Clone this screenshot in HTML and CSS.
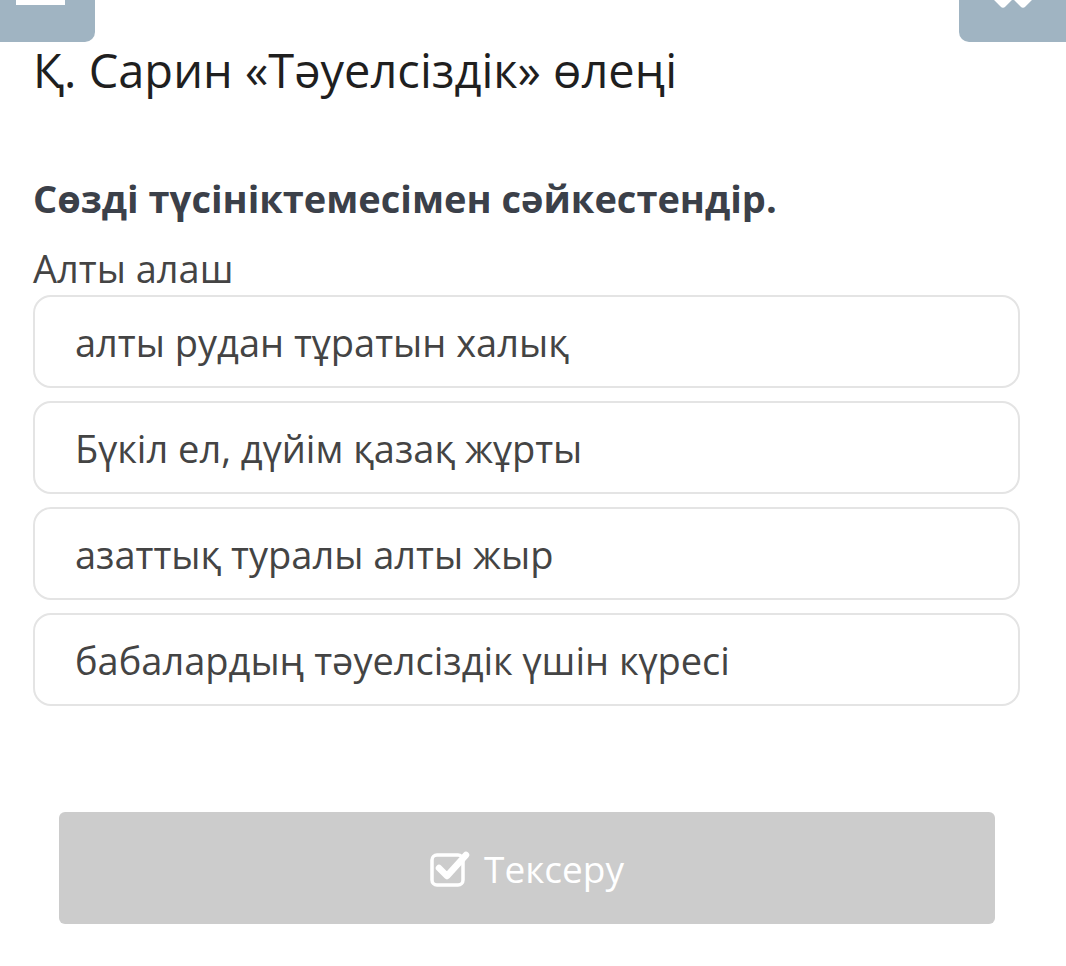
FILE: index.html
```html
<!DOCTYPE html>
<html lang="kk">
<head>
    <meta charset="UTF-8">
    <meta name="viewport" content="width=device-width, initial-scale=1.0">
    <title>Тәуелсіздік</title>
    <link rel="stylesheet" href="styles.css">
</head>
<body>
    <div class="topbar">
        <div class="tab tab-left"><span class="tab-bar"></span></div>
        <div class="tab tab-right">
            <svg class="tab-icon" width="44" height="12" viewBox="0 0 44 12">
                <path d="M2 -6 L12 4 L22 -6 M22 -6 L32 4 L42 -6" fill="none" stroke="#fff" stroke-width="7" stroke-linejoin="round" stroke-linecap="round"/>
            </svg>
        </div>
    </div>
    <div class="page">
        <h1 class="title">Қ. Сарин «Тәуелсіздік» өлеңі</h1>
        <h2 class="task">Сөзді түсініктемесімен сәйкестендір.</h2>
        <div class="word">Алты алаш</div>
        <div class="options">
            <div class="option">алты рудан тұратын халық</div>
            <div class="option">Бүкіл ел, дүйім қазақ жұрты</div>
            <div class="option">азаттық туралы алты жыр</div>
            <div class="option">бабалардың тәуелсіздік үшін күресі</div>
        </div>
        <button class="check-btn">
            <svg class="check-icon" width="40" height="38" viewBox="0 0 40 38">
                <rect x="2" y="6" width="31" height="30" rx="5" fill="none" stroke="#fff" stroke-width="3.5"/>
                <path d="M9 19 L17 27 L36 6" fill="none" stroke="#fff" stroke-width="6.5" stroke-linecap="round" stroke-linejoin="round"/>
            </svg>
            Тексеру
        </button>
    </div>
</body>
</html>
```
FILE: styles.css
```css
body {
    margin: 0;
    font-family: "Open Sans", "Noto Sans", sans-serif;
    background-color: #fff;
    color: #222;
}
.topbar {
    display: flex;
    justify-content: space-between;
    height: 42px;
}
.tab {
    background-color: #a0b4c2;
    height: 42px;
}
.tab-left {
    width: 95px;
    border-bottom-right-radius: 10px;
    padding-left: 16px;
    box-sizing: border-box;
}
.tab-bar {
    display: block;
    width: 49px;
    height: 5px;
    background-color: #fff;
}
.tab-right {
    width: 107px;
    border-bottom-left-radius: 10px;
    display: flex;
    justify-content: center;
}
.page {
    padding: 0 46px 0 33px;
}
.title {
    margin: 0;
    font-size: 47px;
    font-weight: 400;
    line-height: 56px;
    color: #1f1f1f;
}
.task {
    margin: 75px 0 0;
    font-size: 38px;
    font-weight: 700;
    line-height: 50px;
    color: #3b4049;
}
.word {
    margin-top: 25px;
    font-size: 38px;
    line-height: 40px;
    color: #444;
}
.options {
    display: flex;
    flex-direction: column;
    gap: 13px;
    margin-top: 7px;
}
.option {
    height: 89px;
    border: 2px solid #e4e4e4;
    border-radius: 18px;
    padding: 0 40px;
    display: flex;
    align-items: center;
    font-size: 38px;
    color: #444;
}
.check-btn {
    display: flex;
    align-items: center;
    justify-content: center;
    gap: 14px;
    width: 936px;
    height: 112px;
    margin: 106px 0 0 26px;
    border: none;
    border-radius: 6px;
    background-color: #cccccc;
    color: #fff;
    font-family: inherit;
    font-size: 37px;
}
```
